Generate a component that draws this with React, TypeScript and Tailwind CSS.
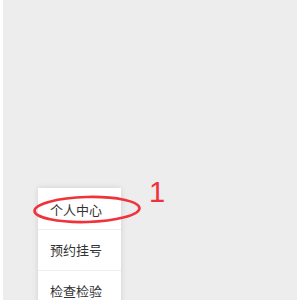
import React from "react";

const items = ["个人中心", "预约挂号", "检查检验"];

export default function App() {
  return (
    <div
      className="w-[300px] h-[300px] bg-white px-[3px] overflow-hidden"
      style={{ fontFamily: '"Noto Sans CJK SC", "Noto Sans", sans-serif' }}
    >
      <div className="relative h-full bg-[#ededed] overflow-hidden pt-[188px] pl-[35px]">
        <div className="w-[83px] bg-white shadow-[0_0_6px_rgba(0,0,0,0.12)]">
          {items.map((t, i) => (
            <div
              key={t}
              className={`h-[41px] flex items-center pl-[12px] text-[13px] text-[#333] ${
                i > 0 ? "border-t border-[#eeeeee]" : "pt-[2px]"
              }`}
            >
              {t}
            </div>
          ))}
        </div>
        <svg
          className="absolute left-0 top-0 pointer-events-none"
          width="294"
          height="300"
          viewBox="0 0 294 300"
        >
          <ellipse
            cx="84"
            cy="209.5"
            rx="52.5"
            ry="12.5"
            fill="none"
            stroke="#f0323a"
            strokeWidth="2.6"
            transform="rotate(-1.5 84 209.5)"
          />
        </svg>
        <div
          className="absolute left-[146px] top-[178px] text-[29px] leading-none text-[#f0323a]"
          style={{ fontFamily: '"Liberation Sans", Arial, sans-serif' }}
        >
          1
        </div>
      </div>
    </div>
  );
}
